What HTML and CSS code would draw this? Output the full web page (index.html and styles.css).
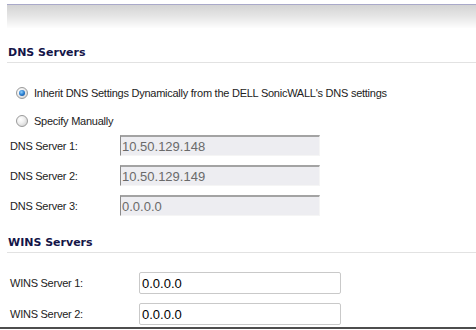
FILE: index.html
```html
<!DOCTYPE html>
<html>
<head>
<meta charset="utf-8">
<link rel="stylesheet" href="styles.css">
</head>
<body>
<div class="page">
  <div class="topbar"></div>
  <h2 class="section-title dns-title">DNS Servers</h2>
  <div class="radios">
    <label class="radio-row"><span class="radio checked"></span>Inherit DNS Settings Dynamically from the DELL SonicWALL's DNS settings</label>
    <label class="radio-row"><span class="radio"></span>Specify Manually</label>
  </div>
  <div class="fields dns-fields">
    <div class="field-row"><span class="lbl">DNS Server 1:</span><input class="box box-disabled" type="text" value="10.50.129.148" readonly></div>
    <div class="field-row"><span class="lbl">DNS Server 2:</span><input class="box box-disabled" type="text" value="10.50.129.149" readonly></div>
    <div class="field-row"><span class="lbl">DNS Server 3:</span><input class="box box-disabled" type="text" value="0.0.0.0" readonly></div>
  </div>
  <h2 class="section-title wins-title">WINS Servers</h2>
  <div class="fields wins-fields">
    <div class="field-row"><span class="lbl">WINS Server 1:</span><input class="box box-edit" type="text" value="0.0.0.0"></div>
    <div class="field-row"><span class="lbl">WINS Server 2:</span><input class="box box-edit" type="text" value="0.0.0.0"></div>
  </div>
</div>
<div class="bottom-rule"></div>
</body>
</html>
```
FILE: styles.css
```css
html, body {
  margin: 0;
  padding: 0;
  background: #ffffff;
}
body {
  width: 476px;
  height: 330px;
  overflow: hidden;
  font-family: "Liberation Sans", Arial, sans-serif;
  font-size: 11px;
  letter-spacing: -0.25px;
  color: #222222;
}
.page {
  padding: 4px 0 0 7px;
}
.topbar {
  height: 23px;
  border-top: 1px solid #a9a9c9;
  background: linear-gradient(to bottom, #d3d3d3 0%, #e6e6e6 50%, #fdfdfd 100%);
}
.section-title {
  margin: 0;
  font-family: "DejaVu Sans", Verdana, sans-serif;
  font-weight: bold;
  font-size: 11px;
  letter-spacing: 0;
  line-height: 14px;
  color: #141548;
  padding: 0 0 2px 1px;
  border-bottom: 1px solid #e2e2e2;
}
.dns-title {
  margin-top: 18px;
}
.wins-title {
  margin-top: 20px;
}
.radios {
  margin-top: 17px;
  display: flex;
  flex-direction: column;
  gap: 2px;
}
.radio-row {
  display: flex;
  align-items: center;
  height: 26px;
  padding-left: 9px;
  gap: 6px;
}
.radio {
  width: 10px;
  height: 10px;
  border-radius: 50%;
  border: 1px solid #9a9a9a;
  background: radial-gradient(circle at 35% 35%, #ffffff 0%, #f0f0f0 40%, #c8c8c8 100%);
  position: relative;
  flex: none;
}
.radio.checked::after {
  content: "";
  position: absolute;
  left: 2px;
  top: 2px;
  width: 6px;
  height: 6px;
  border-radius: 50%;
  background: radial-gradient(circle at 40% 35%, #8fd0ff 0%, #2a7fd0 50%, #0b3f88 100%);
}
.fields {
  display: flex;
  flex-direction: column;
  gap: 9px;
}
.dns-fields {
  margin-top: 1px;
}
.wins-fields {
  margin-top: 19px;
}
.field-row {
  display: flex;
  align-items: center;
}
.lbl {
  padding-left: 3px;
  flex: none;
}
.dns-fields .lbl {
  width: 110px;
}
.wins-fields .lbl {
  width: 129px;
}
.box {
  box-sizing: border-box;
  margin: 0;
  font-family: "Liberation Sans", Arial, sans-serif;
  font-size: 13px;
  letter-spacing: 0;
  outline: none;
}
.box-disabled {
  width: 200px;
  height: 21px;
  padding: 0 0 0 1px;
  color: #6a6a6a;
  background: #ededf1;
  border-style: solid;
  border-width: 2px 1px 1px 1px;
  border-color: #a3a3a3 #f5f5f5 #f5f5f5 #8a8a8a;
}
.box-edit {
  width: 202px;
  height: 22px;
  padding: 0 0 0 2px;
  color: #000000;
  background: #ffffff;
  border: 1px solid #c9c9c9;
  border-radius: 2px;
}
.bottom-rule {
  margin-top: 2px;
  height: 2px;
  background: #4d4d4d;
}
```
